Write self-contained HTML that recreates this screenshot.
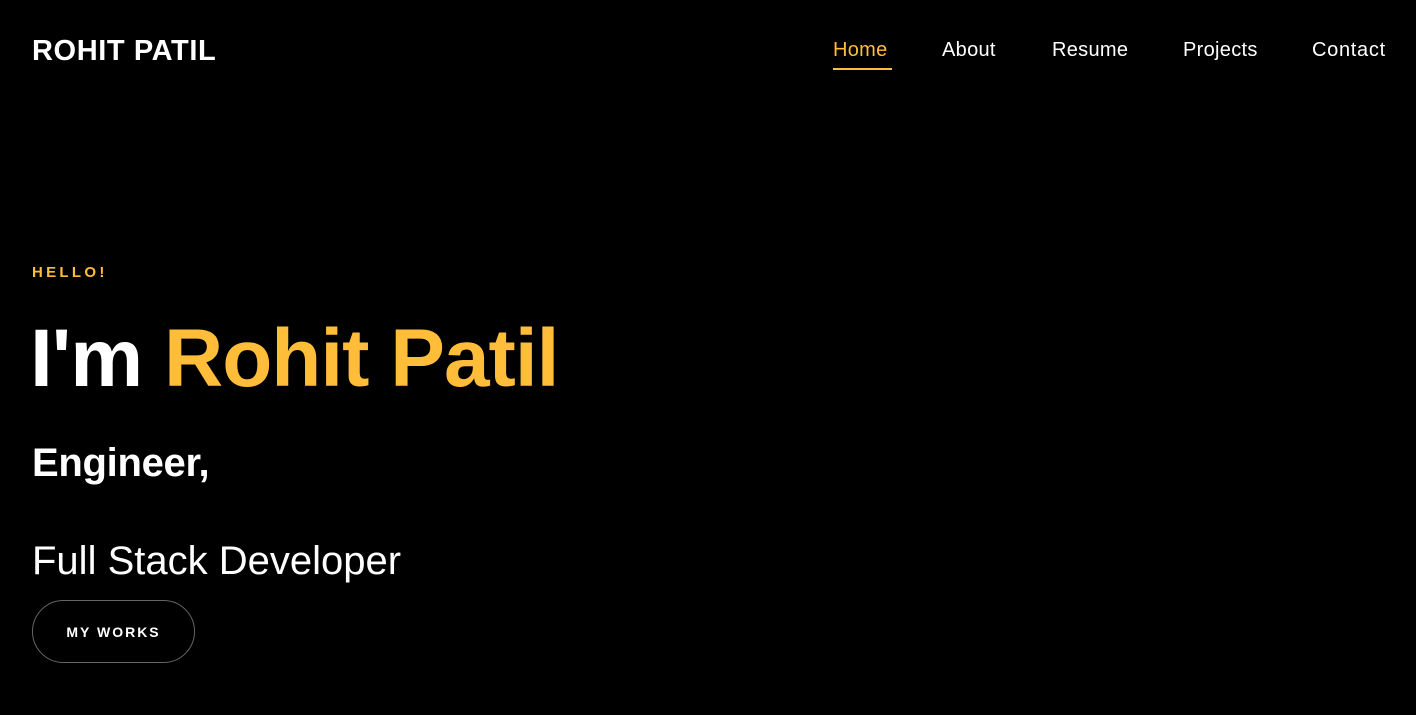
<!DOCTYPE html>
<html><head><meta charset="utf-8"><style>
body{margin:0;width:1416px;height:715px;background:#000;overflow:hidden;font-family:"Liberation Sans",sans-serif;color:#fff;position:relative}
.a{position:absolute;white-space:nowrap;line-height:1}
.y{color:#ffbd39}
nav .a{font-size:20px;top:40px;letter-spacing:0.3px}
</style></head><body>
<div class="a" style="left:32px;top:37px;font-size:29px;font-weight:900;letter-spacing:0.6px">ROHIT PATIL</div>
<nav>
<div class="a y" style="left:833px">Home</div>
<div style="position:absolute;left:833px;top:68px;width:59px;height:2px;background:#ffbd39"></div>
<div class="a" style="left:942px">About</div>
<div class="a" style="left:1052px">Resume</div>
<div class="a" style="left:1183px">Projects</div>
<div class="a" style="left:1312px;letter-spacing:0.7px">Contact</div>
</nav>
<div class="a y" style="left:32px;top:265px;font-size:15px;font-weight:bold;letter-spacing:3.3px">HELLO!</div>
<div class="a" style="left:30px;top:318px;font-size:82px;font-weight:bold;letter-spacing:-1px">I'm <span class="y">Rohit Patil</span></div>
<div class="a" style="left:32px;top:443px;font-size:40px;font-weight:bold;letter-spacing:-0.3px">Engineer,</div>
<div class="a" style="left:32px;top:541px;font-size:40px">Full Stack Developer</div>
<div style="position:absolute;left:32px;top:600px;width:161px;height:61px;border:1px solid #666;border-radius:32px;display:flex;align-items:center;justify-content:center;font-size:14px;font-weight:bold;letter-spacing:2px">MY WORKS</div>
</body></html>
